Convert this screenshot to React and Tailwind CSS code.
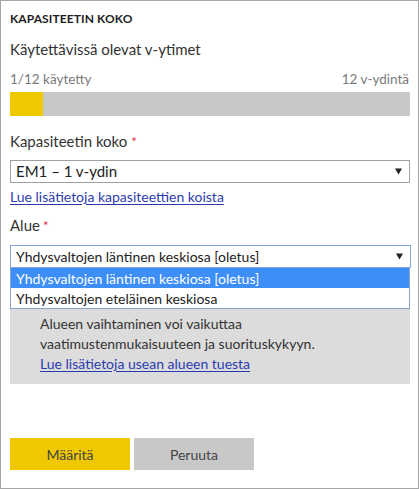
function Arrow() {
  return (
    <svg width="7" height="7" viewBox="0 0 7 7" className="shrink-0">
      <path d="M0 0.5 H7 L3.5 6.5 Z" fill="#222" />
    </svg>
  );
}

export default function App() {
  const font = { fontFamily: 'Lato, "Noto Sans", sans-serif' };
  return (
    <div style={font} className="w-[419px] h-[489px] border border-[#a6a6a6] bg-white px-[9px] text-[#333333] overflow-hidden">
      <div className="pt-[10px] text-[12px] leading-[16px] font-bold tracking-[0.1px] text-[#1e1e1e]">KAPASITEETIN KOKO</div>
      <div className="mt-[12px] text-[15px] leading-[20px] text-[#333]">Käytettävissä olevat v-ytimet</div>
      <div className="mt-[12px] flex justify-between text-[13.5px] leading-[16px] text-[#7a7a7a]">
        <span>1/12 käytetty</span>
        <span>12 v-ydintä</span>
      </div>
      <div className="mt-[5px] h-[24px] w-[400px] bg-[#c8c8c8] flex">
        <div className="w-[33px] h-full bg-[#f0c800]" />
      </div>
      <div className="mt-[15px] text-[15px] leading-[20px] text-[#333]">
        Kapasiteetin koko <span className="text-[#e0303a] text-[13px]">*</span>
      </div>
      <div className="mt-[8px] h-[23px] w-[400px] border border-[#a0a0a0] flex items-center justify-between pl-[5px] pr-[7px] text-[15px] text-[#222]">
        <span>EM1 – 1 v-ydin</span>
        <Arrow />
      </div>
      <div className="mt-[4px] text-[14px] leading-[20px] text-[#2a3bb0] underline underline-offset-2">Lue lisätietoja kapasiteettien koista</div>
      <div className="mt-[8px] text-[15px] leading-[20px] text-[#333]">
        Alue<span className="text-[#e0303a] text-[13px] ml-[3px]">*</span>
      </div>
      <div className="relative mt-[9px]">
        <div className="h-[23px] w-[401px] border border-[#86a3d6] flex items-center justify-between pl-[5px] pr-[7px] text-[14px] text-[#222]">
          <span>Yhdysvaltojen läntinen keskiosa [oletus]</span>
          <Arrow />
        </div>
        <div className="absolute left-0 top-[23px] w-[400px] border-x border-b border-[#8aa2d0] bg-white z-10 text-[14px]">
          <div className="h-[20px] bg-[#3d8ef7] text-white flex items-center pl-[5px]">Yhdysvaltojen läntinen keskiosa [oletus]</div>
          <div className="h-[20px] flex items-center pl-[5px] text-[#222]">Yhdysvaltojen eteläinen keskiosa</div>
        </div>
        <div className="mt-[10px] w-[400px] bg-[#dcdcdc] pl-[30px] pt-[36px] pb-[10px] text-[14px] leading-[20px] text-[#333]">
          <div>Alueen vaihtaminen voi vaikuttaa</div>
          <div>vaatimustenmukaisuuteen ja suorituskykyyn.</div>
          <div className="text-[#2a3bb0] underline underline-offset-2">Lue lisätietoja usean alueen tuesta</div>
        </div>
      </div>
      <div className="mt-[54px] flex gap-[4px]">
        <div className="w-[120px] h-[32px] bg-[#f0c800] flex items-center justify-center text-[14px] text-[#444]">Määritä</div>
        <div className="w-[120px] h-[32px] bg-[#c8c8c8] flex items-center justify-center text-[14px] text-[#444]">Peruuta</div>
      </div>
    </div>
  );
}
